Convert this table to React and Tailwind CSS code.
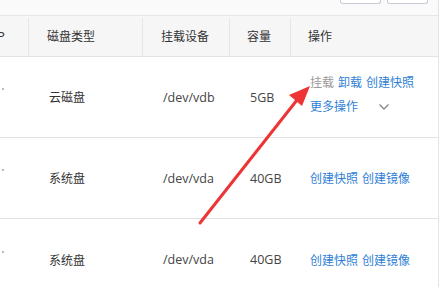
import React from "react"

const cols = ["w-[32px]", "w-[114px]", "w-[87px]", "w-[61px]", "flex-1"]

const rows = [
  { type: "云磁盘", dev: "/dev/vdb", size: "5GB", mount: true },
  { type: "系统盘", dev: "/dev/vda", size: "40GB", mount: false },
  { type: "系统盘", dev: "/dev/vda", size: "40GB", mount: false }
]

const Arrow = () => (
  <svg className="absolute left-0 top-0 pointer-events-none" width="443" height="287">
    <line x1="200" y1="223" x2="297" y2="100" stroke="#ee3434" strokeWidth="3" strokeLinecap="round" />
    <polygon points="310,86 289,95 302,106" fill="#ee3434" />
  </svg>
)

export default function App() {
  return (
    <div
      className="relative w-[443px] h-[287px] overflow-hidden bg-white text-[12px] text-[#333]"
      style={{ fontFamily: '"Open Sans", "Noto Sans CJK SC", sans-serif' }}
    >
      <div className="w-[439px] h-[300px] border-r border-[#e4e4e4]">
        {/* top toolbar, cut off */}
        <div className="h-[16px] bg-[#fafafa] border-b border-[#e6e6e6] flex justify-end gap-[6px] pr-[10px]">
          <div className="w-[41px] h-[4px] border border-t-0 border-[#c8ccd4] rounded-b-[3px] bg-white" />
          <div className="w-[41px] h-[4px] border border-t-0 border-[#c8ccd4] rounded-b-[3px] bg-white" />
        </div>

        {/* header */}
        <div className="flex h-[41px] bg-[#f6f6f6] border-b border-[#e2e2e2] text-[#333] pt-[2px]">
          <div className={`${cols[0]} border-r border-[#e6e6e6] flex items-center -ml-[3px]`}>
            <span className="text-[13px]">P</span>
          </div>
          <div className={`${cols[1]} border-r border-[#e6e6e6] flex items-center pl-[18px]`}>磁盘类型</div>
          <div className={`${cols[2]} border-r border-[#e6e6e6] flex items-center pl-[18px]`}>挂载设备</div>
          <div className={`${cols[3]} border-r border-[#e6e6e6] flex items-center pl-[17px]`}>容量</div>
          <div className={`${cols[4]} flex items-center pl-[17px]`}>操作</div>
        </div>

        {rows.map((r, i) => (
          <div key={i} className={`flex h-[81px] pt-[2px] ${i < 2 ? "border-b border-[#e2e2e2]" : ""}`}>
            <div className={`${cols[0]} flex items-center`}>
              <span className="w-[2px] h-[2px] bg-[#bbb] ml-[2px] -mt-[18px]" />
            </div>
            <div className={`${cols[1]} flex items-center pl-[17px]`}>{r.type}</div>
            <div className={`${cols[2]} flex items-center pl-[17px] text-[12.5px] text-[#444]`}>{r.dev}</div>
            <div className={`${cols[3]} flex items-center pl-[17px] text-[12.5px] text-[#444]`}>{r.size}</div>
            <div className={`${cols[4]} flex items-center pl-[16px] text-[#2f7fd6]`}>
              {r.mount ? (
                <div className="flex flex-col gap-[6px] -mt-[6px]">
                  <div className="flex gap-[4px]">
                    <span className="text-[#999]">挂载</span>
                    <span>卸载</span>
                    <span>创建快照</span>
                  </div>
                  <div className="flex items-center">
                    <span>更多操作</span>
                    <svg className="ml-[20px]" width="12" height="8" viewBox="0 0 12 8">
                      <path d="M1.5 1.5 L6 6 L10.5 1.5" fill="none" stroke="#888" strokeWidth="1.3" />
                    </svg>
                  </div>
                </div>
              ) : (
                <div className="flex gap-[4px]">
                  <span>创建快照</span>
                  <span>创建镜像</span>
                </div>
              )}
            </div>
          </div>
        ))}
      </div>
      <Arrow />
    </div>
  )
}
